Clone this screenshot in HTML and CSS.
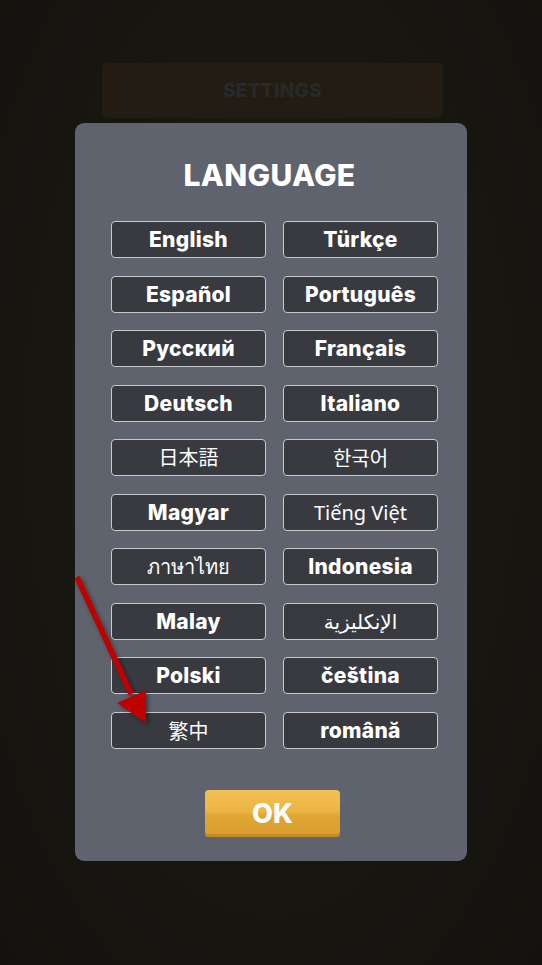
FILE: index.html
```html
<!DOCTYPE html>
<html>
<head>
    <meta charset="UTF-8">
    <title>Language</title>
    <link rel="stylesheet" href="styles.css">
</head>
<body>
    <div class="screen">
        <!-- faded button behind the dialog -->
        <div class="settings">SETTINGS</div>

        <div class="dialog">
            <h1 class="title">LANGUAGE</h1>
            <div class="langs">
                <button class="lang">English</button>
                <button class="lang">Türkçe</button>
                <button class="lang">Español</button>
                <button class="lang">Português</button>
                <button class="lang">Русский</button>
                <button class="lang">Français</button>
                <button class="lang">Deutsch</button>
                <button class="lang">Italiano</button>
                <button class="lang native" lang="ja">日本語</button>
                <button class="lang native" lang="ko">한국어</button>
                <button class="lang">Magyar</button>
                <button class="lang native" lang="vi">Tiếng Việt</button>
                <button class="lang native" lang="th">ภาษาไทย</button>
                <button class="lang">Indonesia</button>
                <button class="lang">Malay</button>
                <button class="lang native" lang="ar">الإنكليزية</button>
                <button class="lang">Polski</button>
                <button class="lang">čeština</button>
                <button class="lang native" lang="zh-Hant">繁中</button>
                <button class="lang">română</button>
            </div>
            <button class="ok">OK</button>
        </div>

        <!-- annotation arrow pointing at the chinese button -->
        <svg class="arrow" width="542" height="965" viewBox="0 0 542 965">
            <defs>
                <filter id="shade" x="-20%" y="-20%" width="140%" height="140%">
                    <feDropShadow dx="2" dy="2" stdDeviation="2" flood-color="#000" flood-opacity="0.45"/>
                </filter>
            </defs>
            <g filter="url(#shade)" fill="#bf0000" stroke="#bf0000">
                <line x1="77" y1="577" x2="131" y2="694" stroke-width="5.5"/>
                <polygon points="117,703 146,690 146,723" stroke="none"/>
            </g>
        </svg>
    </div>
</body>
</html>
```

FILE: styles.css
```css
html, body {
    margin: 0;
    height: 100%;
}

body {
    background-color: #17150f;
    font-family: "Inter", "Noto Sans", sans-serif;
}

.screen {
    position: relative;
    height: 965px;
    overflow: hidden;
    background: radial-gradient(ellipse at 50% 45%, #1d1b15 0%, #181611 60%, #13120e 100%);
    display: flex;
    flex-direction: column;
    align-items: center;
    padding-top: 63px;
    box-sizing: border-box;
}

.settings {
    width: 341px;
    height: 55px;
    margin-left: 3px;
    background-color: #221c13;
    border-radius: 5px;
    color: #29282a;
    font-weight: 800;
    font-size: 19px;
    letter-spacing: 0.3px;
    display: flex;
    align-items: center;
    justify-content: center;
}

.dialog {
    width: 392px;
    margin-top: 5px;
    background-color: #5f636d;
    border-radius: 9px;
    box-sizing: border-box;
    padding: 34px 29px 24px 36px;
    display: flex;
    flex-direction: column;
    align-items: center;
}

.title {
    margin: 0 10px 28px 0;
    color: #ffffff;
    font-size: 30px;
    font-weight: 800;
    line-height: 36px;
    letter-spacing: 0.3px;
}

.langs {
    display: grid;
    grid-template-columns: 155px 155px;
    column-gap: 17px;
    row-gap: 17.5px;
}

.lang {
    height: 37px;
    margin: 0;
    padding: 0;
    background-color: #383a40;
    border: 1px solid #c9cacd;
    border-radius: 4px;
    color: #ffffff;
    font-family: "Inter", "Noto Sans", sans-serif;
    font-weight: 800;
    font-size: 21px;
    letter-spacing: 0.3px;
    line-height: 35px;
}

.native {
    font-family: "Noto Sans", "Noto Sans CJK JP", "DejaVu Sans", sans-serif;
    font-weight: 400;
    font-size: 20px;
    letter-spacing: 0;
}

.native:lang(ko) {
    font-family: "Noto Sans CJK KR", sans-serif;
}

.native:lang(zh-Hant) {
    font-family: "Noto Sans CJK TC", sans-serif;
}

.ok {
    margin: 41px 4px 0 0;
    width: 135px;
    height: 47px;
    border: none;
    border-radius: 4px;
    background: linear-gradient(#f2c154 0%, #ebb544 45%, #dfa634 55%, #d89d2e 100%);
    box-shadow: inset 0 -3px 0 #c48a26;
    color: #ffffff;
    font-family: "Inter", "Noto Sans", sans-serif;
    font-weight: 800;
    font-size: 27px;
}

.arrow {
    position: absolute;
    left: 0;
    top: 0;
    pointer-events: none;
}
```
